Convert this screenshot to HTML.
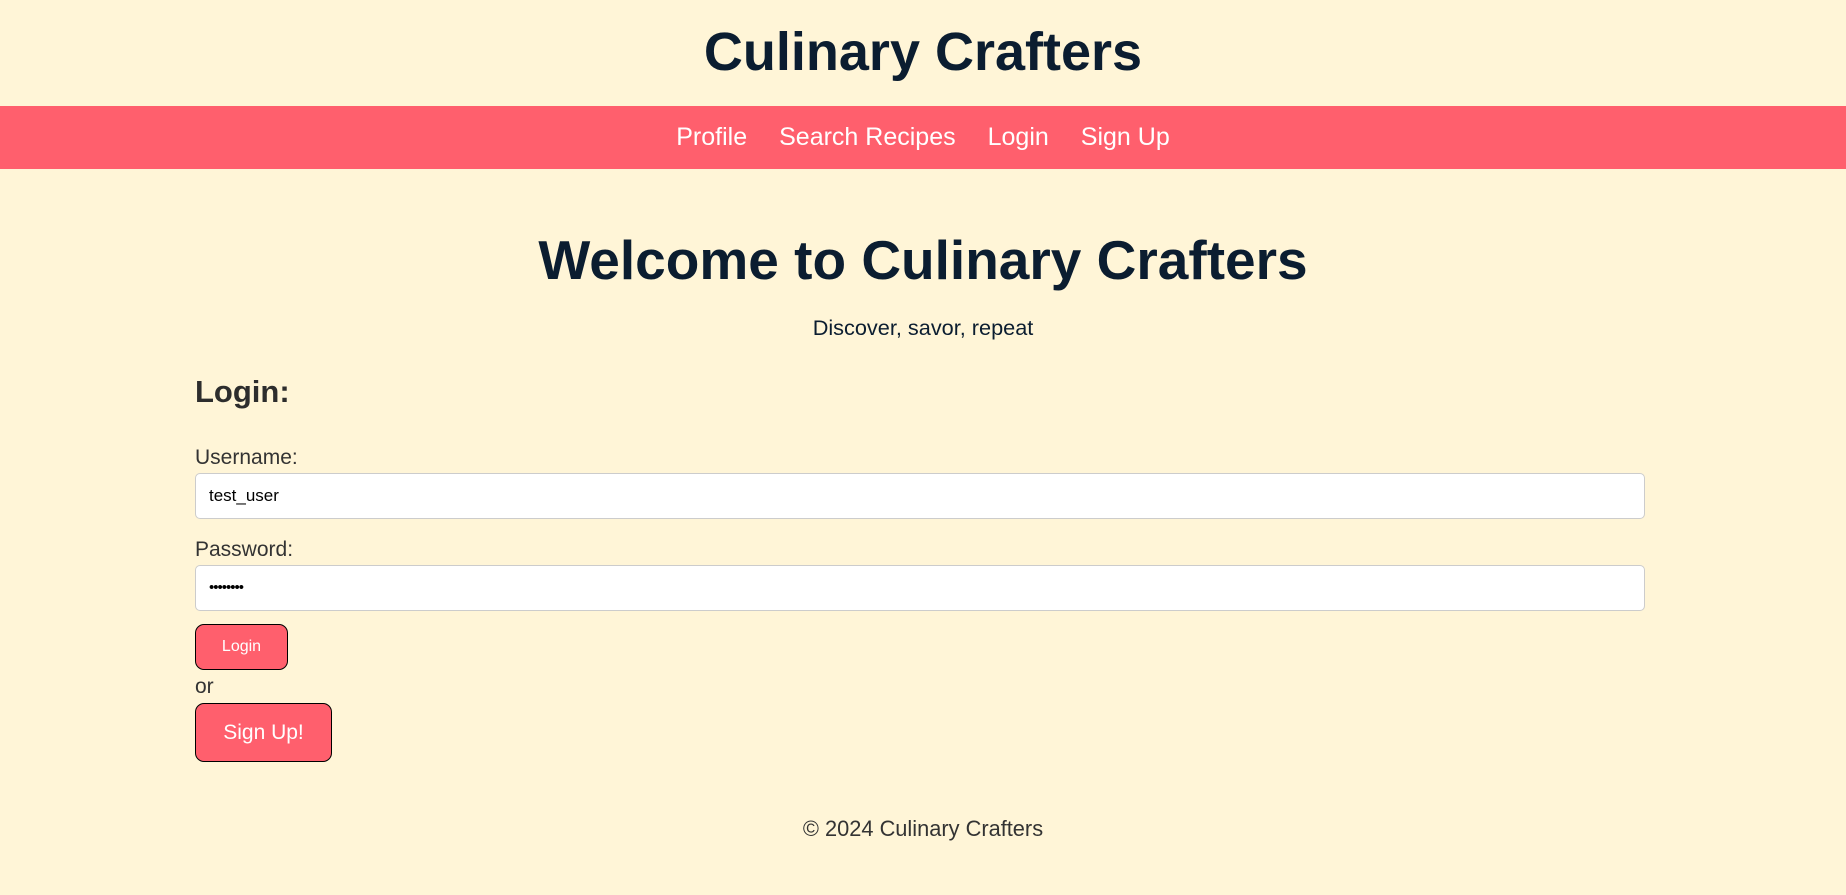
<!DOCTYPE html>
<html><head><meta charset="utf-8"><style>
*{box-sizing:border-box;margin:0;padding:0}
body{width:1846px;height:895px;background:#fff5d7;font-family:"Liberation Sans",sans-serif;position:relative;overflow:hidden;color:#333}
.a{position:absolute}
h1{position:absolute;top:21px;left:0;width:1846px;text-align:center;font-size:54px;color:#0b1d30;font-weight:bold;line-height:62px}
nav{position:absolute;top:106px;left:0;width:1846px;height:63px;background:#ff5f6d;text-align:center;line-height:63px;font-size:25px;color:#fff}
nav span{margin:0 16px}
h2{position:absolute;top:227px;left:0;width:1846px;text-align:center;font-size:55px;color:#0b1d30;line-height:66px}
.sub{top:315px;left:0;width:1846px;text-align:center;font-size:21.7px;color:#0b1d30}
.lh{left:195px;top:374px;font-size:31px;font-weight:bold;color:#2d2d2d}
.lbl{left:195px;font-size:21px;color:#333}
.inp{left:195px;width:1450px;height:46px;background:#fff;border:1px solid #ccc;border-radius:5px;padding-left:13px;line-height:44px;font-size:17px;color:#000}
.btn{left:195px;background:#ff5f6d;border:1px solid #000;border-radius:9px;color:#fff;text-align:center}
.foot{top:816px;left:0;width:1846px;text-align:center;font-size:21.8px;color:#333}
</style></head><body>
<h1>Culinary Crafters</h1>
<nav><span>Profile</span><span>Search Recipes</span><span>Login</span><span>Sign Up</span></nav>
<h2>Welcome to Culinary Crafters</h2>
<div class="a sub">Discover, savor, repeat</div>
<div class="a lh">Login:</div>
<div class="a lbl" style="top:446px">Username:</div>
<div class="a inp" style="top:473px">test_user</div>
<div class="a lbl" style="top:538px">Password:</div>
<div class="a inp" style="top:565px;font-size:15px;letter-spacing:-1px">••••••••</div>
<div class="a btn" style="top:624px;width:93px;height:46px;line-height:44px;font-size:16px">Login</div>
<div class="a lbl" style="top:675px">or</div>
<div class="a btn" style="top:703px;width:137px;height:59px;line-height:57px;font-size:21px">Sign Up!</div>
<div class="a foot">© 2024 Culinary Crafters</div>
</body></html>
